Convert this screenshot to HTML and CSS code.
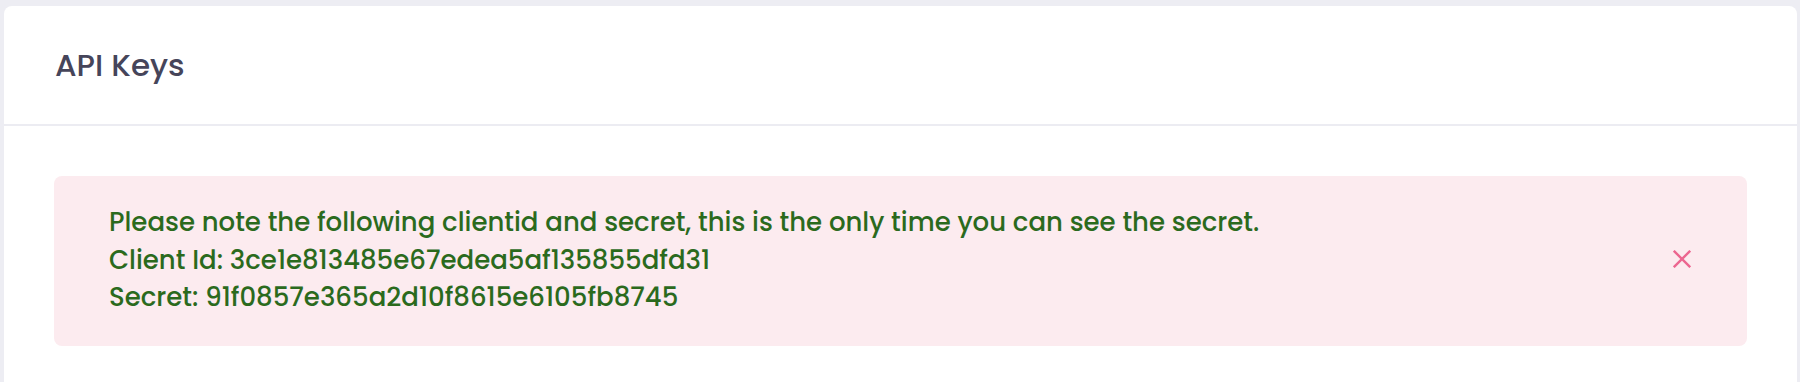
FILE: index.html
```html
<!DOCTYPE html>
<html lang="en">
<head>
<meta charset="utf-8">
<title>API Keys</title>
<link rel="stylesheet" href="styles.css">
</head>
<body>
<div class="card">
  <div class="card-header">
    <h4 class="card-title">API Keys</h4>
  </div>
  <div class="card-body">
    <div class="alert">
      <div class="alert-text">
        <div class="alert-line">Please note the following clientid and secret, this is the only time you can see the secret.</div>
        <div class="alert-line">Client Id: 3ce1e813485e67edea5af135855dfd31</div>
        <div class="alert-line">Secret: 91f0857e365a2d10f8615e6105fb8745</div>
      </div>
      <button class="alert-close" type="button" aria-label="Close">
        <svg width="18" height="18" viewBox="0 0 18 18"><path d="M0.8 0.8 L17.2 17.2 M17.2 0.8 L0.8 17.2" stroke="currentColor" stroke-width="2.4" fill="none"/></svg>
      </button>
    </div>
  </div>
</div>
</body>
</html>
```

FILE: styles.css
```css
html, body {
  margin: 0;
  padding: 0;
}
body {
  background: #ededf3;
  padding: 6px 3px 0 4px;
  font-family: "Poppins", "Inter", "Liberation Sans", sans-serif;
}
.card {
  background: #ffffff;
  border-radius: 8px 8px 0 0;
}
.card-header {
  height: 118px;
  display: flex;
  align-items: center;
  padding: 0 50px;
  border-bottom: 2px solid #ececf2;
}
.card-title {
  margin: 0;
  font-size: 31px;
  font-weight: 500;
  color: #46455a;
  padding-left: 1px;
}
.card-body {
  padding: 50px 50px 50px 50px;
}
.alert {
  display: flex;
  align-items: center;
  background: #fcebef;
  border-radius: 8px;
  padding: 28px 56px 29.5px 55px;
}
.alert-text {
  flex: 1;
  color: #2b6a1d;
  font-size: 26px;
  font-weight: 500;
  line-height: 37.5px;
}
.alert-close {
  border: 0;
  background: none;
  padding: 0;
  margin: 0;
  width: 18px;
  height: 18px;
  color: #ec6690;
  display: flex;
  margin-top: -2px;
}
```
